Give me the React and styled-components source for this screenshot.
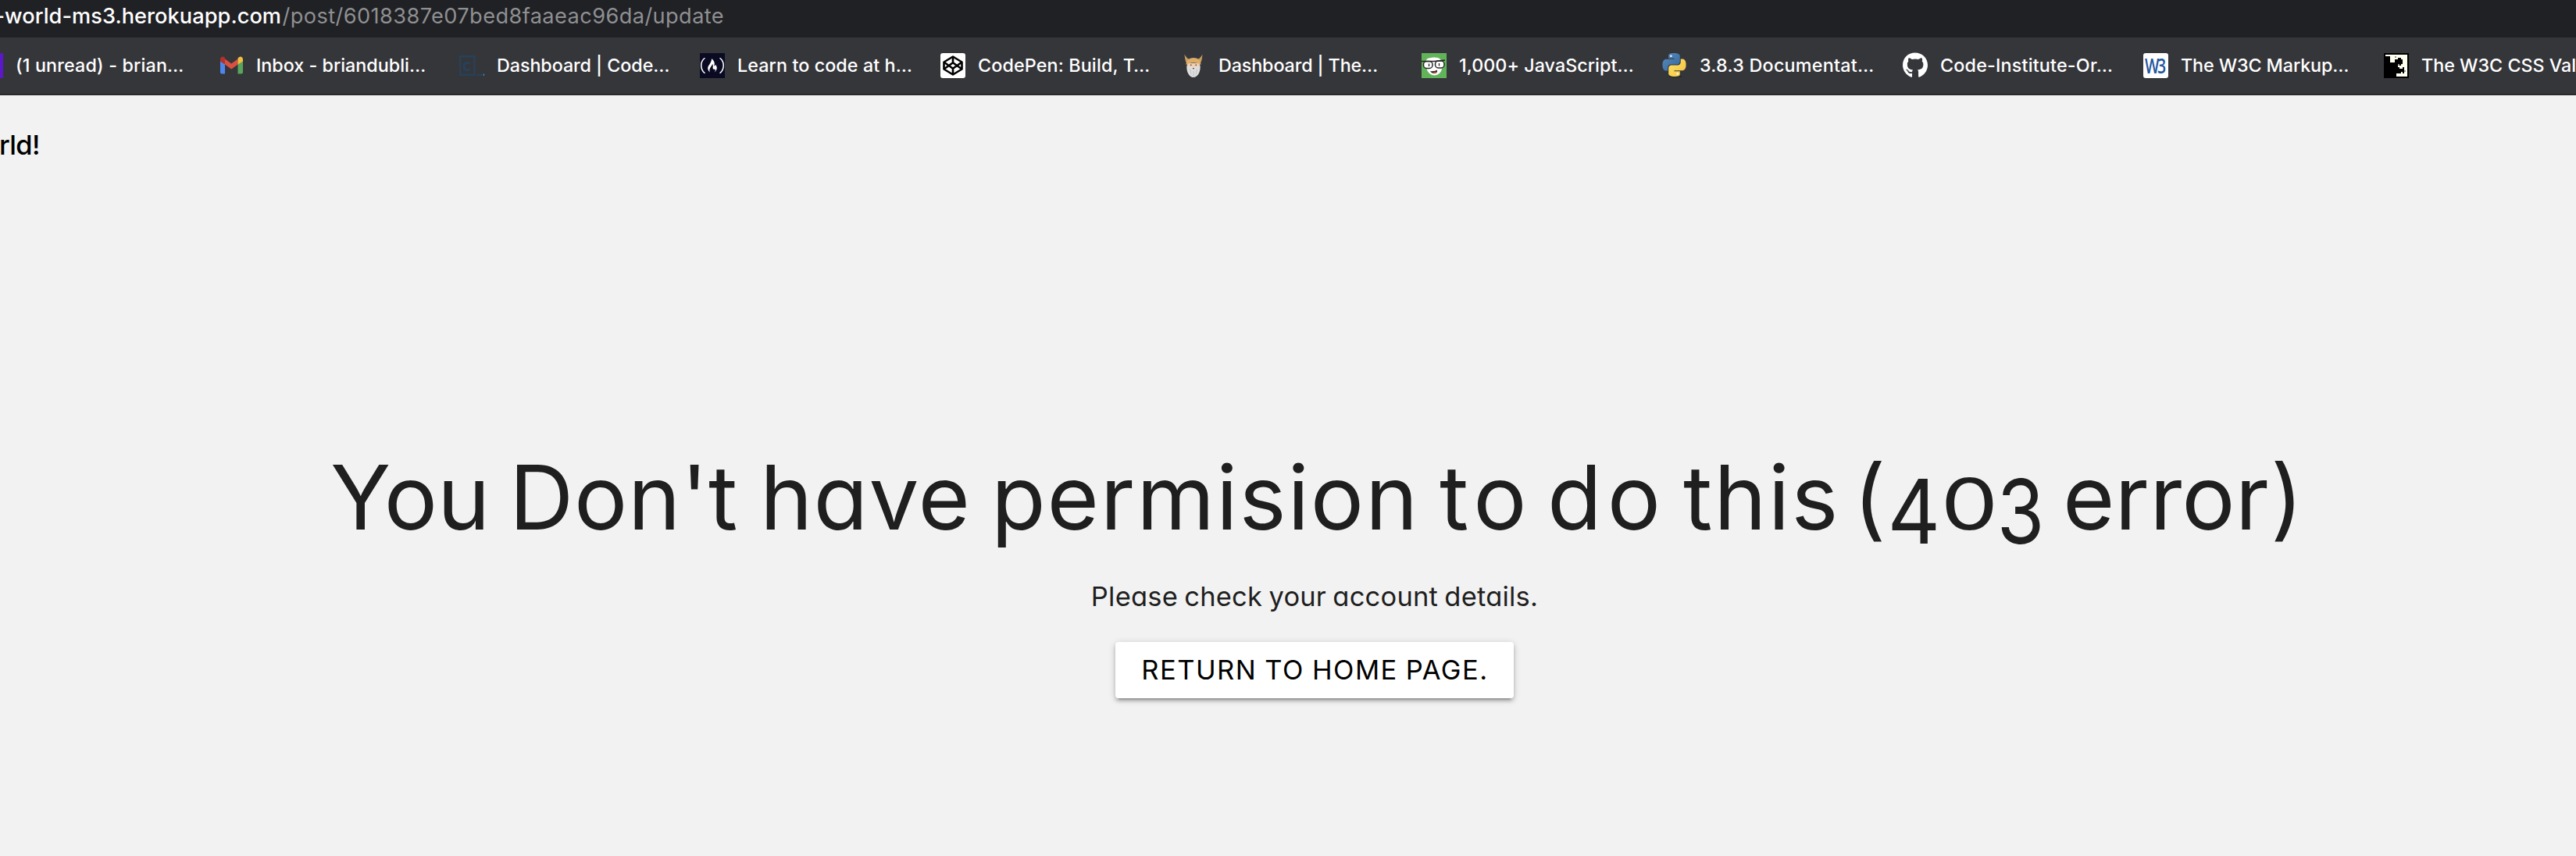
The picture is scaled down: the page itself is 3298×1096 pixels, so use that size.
import React from "react";
import styled, { createGlobalStyle } from "styled-components";
import { SiFreecodecamp } from "react-icons/si";
import { FaGithub } from "react-icons/fa";

const GlobalStyle = createGlobalStyle`
  *, *::before, *::after { box-sizing: border-box; }
  body {
    margin: 0;
    background: #f2f2f2;
    font-family: Inter, "Liberation Sans", sans-serif;
  }
`;

const Screen = styled.div`
  display: flex;
  flex-direction: column;
  width: 100%;
  height: 1096px;
  overflow: hidden;
`;

const AddressBar = styled.div`
  flex: none;
  height: 48px;
  padding-left: 6px;
  background: #202125;
  color: #8f9092;
  font-size: 27.2px;
  line-height: 42px;
  white-space: nowrap;
`;

const Host = styled.span`
  margin-left: -12.5px;
  color: #fff;
  font-weight: 500;
  letter-spacing: 0.04px;
`;

const Path = styled.span`
  letter-spacing: 0.4px;
  margin-left: 1.5px;
`;

const Bookmarks = styled.nav`
  flex: none;
  display: flex;
  width: 3600px;
  height: 74px;
  margin-left: -28px;
  padding-bottom: 1px;
  background: #35363a;
  border-bottom: 2px solid #2b2828;
`;

const Bookmark = styled.div`
  flex: none;
  display: flex;
  align-items: center;
  gap: 16px;
  width: 308px;
  color: #fff;
  font-size: 23.3px;
  font-weight: 500;
  white-space: nowrap;
  letter-spacing: ${(p) => p.$spacing || 0}px;
`;

const Favicon = styled.div`
  flex: none;
  display: flex;
  align-items: center;
  justify-content: center;
  width: 32px;
  height: 32px;
  border-radius: ${(p) => p.$radius || 0}px;
  background: ${(p) => p.$bg || "transparent"};
  color: ${(p) => p.$color || "#fff"};
`;

const W3Mark = styled.span`
  font-family: "Open Sans", sans-serif;
  font-size: 27px;
  font-weight: 600;
  letter-spacing: -3px;
  line-height: 32px;
  margin-right: 3px;
  transform: scaleX(0.72);
`;

const Page = styled.main`
  flex: 1;
  display: flex;
  flex-direction: column;
  font-feature-settings: "cv11" 1;
`;

const Brand = styled.div`
  height: 434px;
  margin-left: -1px;
  padding-top: 43px;
  color: #000;
  font-size: 34.5px;
  font-weight: 500;
  letter-spacing: -0.6px;
  line-height: 41px;
`;

const Title = styled.h1`
  display: flex;
  margin: 0;
  padding-left: 423px;
  color: #1f1f1f;
  font-size: 114px;
  font-weight: 400;
  line-height: 161px;
  white-space: nowrap;
`;

const Word = styled.span`
  letter-spacing: ${(p) => p.$spacing || 0}px;
  margin-right: ${(p) => p.$after || 0}px;
`;

const Digit = styled.span`
  display: flex;
  justify-content: center;
  width: ${(p) => p.$width}px;
  margin-right: ${(p) => p.$after || 0}px;
  font-size: ${(p) => p.$size || 114}px;
  transform: translateY(${(p) => p.$drop}px) scaleX(${(p) => p.$stretch});
`;

const Details = styled.div`
  display: flex;
  flex-direction: column;
  align-items: center;
  width: 3366px;
`;

const Message = styled.p`
  margin: 26px 0 38px;
  color: #1f1f1f;
  font-size: 34.5px;
  letter-spacing: 0.2px;
  word-spacing: -1.6px;
  line-height: 41px;
`;

const HomeButton = styled.button`
  width: 510px;
  height: 72px;
  padding: 0 0 1px 1px;
  border: 0;
  border-radius: 4px;
  background: #fff;
  color: #000;
  font: inherit;
  font-size: 34.5px;
  letter-spacing: 1.45px;
  word-spacing: -1px;
  text-transform: uppercase;
  box-shadow: 0 4px 4px rgba(0, 0, 0, 0.14), 0 6px 2px -4px rgba(0, 0, 0, 0.2),
    0 2px 10px rgba(0, 0, 0, 0.2);
`;

const GmailIcon = () => (
  <svg width="32" height="32" viewBox="0 0 32 32">
    <path d="M2 10 8 14V26.500H4a2 2 0 0 1-2-2z" fill="#4f86ec" />
    <path d="M24.500 14 31 10V24.500a2 2 0 0 1-2 2H24.500z" fill="#58a55c" />
    <path d="M8 7.500 16.250 13.500 24.500 7.500V14.500L16.250 20.500 8 14.500z" fill="#d85140" />
    <path d="M2 11V8c0-3 3-4.300 5-2.800L8 6V14.500L2 10.500z" fill="#b4302b" />
    <path d="M31 11V8c0-3-3-4.300-5-2.800l-1.500 1.200V14.500L31 10.500z" fill="#f2bf42" />
  </svg>
);

const CodecademyIcon = () => (
  <svg width="32" height="32" viewBox="0 0 32 32" fill="none" stroke="#27415a" strokeWidth="2.400">
    <path d="M1.200 4.200H19.300V27.800H1.200zM23 27.800H31" />
    <path d="M13.500 13.500c-4-2.600-7.500-.5-7.500 3.500s3.500 6.100 7.500 3.500" strokeWidth="3" />
    <path d="M31 27.800h1" stroke="#5e8fb5" />
  </svg>
);

const CodepenIcon = () => (
  <svg width="32" height="32" viewBox="0 0 32 32" fill="none" stroke="#000" strokeWidth="2.600" strokeLinejoin="round">
    <path d="M16 4.500 27.500 11.500V20.500L16 27.500 4.500 20.500V11.500z" />
    <path d="M16 4.500V12.300M16 27.500V19.700M4.500 11.500 16 19.700 27.500 11.500M4.500 20.500 16 12.300 27.500 20.500" />
  </svg>
);

const VikingIcon = () => (
  <svg width="32" height="32" viewBox="0 0 32 32">
    <path d="M4.500 1.500C5 7 5.500 11 7.500 13L11 8C7.500 7 6 4 4.500 1.500zM27.500 1.500C27 7 26.500 11 24.500 13L21 8C24.500 7 26 4 27.500 1.500z" fill="#c79e62" />
    <path d="M8 13h16v7H8z" fill="#f1cfb0" />
    <path d="M6.500 15C6.500 9 10.500 6 16 6s9.500 3 9.500 9c-3-2-6-2.500-9.500-2.500S9.500 13 6.500 15z" fill="#dcae69" />
    <path d="M7.500 15.500C9 18 13 18 16 17.500c3 .5 7 .5 8.500-2C25.500 23 22 31 16 31S6.500 23 7.500 15.500z" fill="#dedede" />
    <path d="M11.500 20 13 27M20.500 20 19 27M16 23v7" stroke="#bdbdbd" strokeWidth=".8" />
    <path d="M12 14.500h1.500v1.500H12zM18.500 14.500H20V16h-1.500zM15 19h2v1.300h-2z" fill="#53463e" />
  </svg>
);

const GlassesFaceIcon = () => (
  <svg width="32" height="32" viewBox="0 0 32 32">
    <path d="M6 9C8 5 12 7 14 5.500c4 0 8 0 10 2.500 3 3 3 9 1.500 14-1 3-5 6.500-9 6.500s-8-3-9.500-7C5.500 17 5 12 6 9z" fill="#fff" />
    <g fill="#fff" stroke="#252525" strokeWidth="1.500">
      <rect x="2.500" y="10.500" width="11.500" height="9" rx="4" />
      <rect x="17.500" y="10" width="11.500" height="9" rx="4" />
    </g>
    <path d="M0 10.500 16 10.500 30 9" stroke="#252525" strokeWidth="1.600" fill="none" />
    <path d="M9.500 13.500v3.500M22.500 13v3.500" stroke="#222" strokeWidth="1.300" />
    <path d="M11 23c3 .5 7 0 9-1.500.5 3-1 4.500-3.500 4.500S12 25 11 23z" fill="#2a2020" />
    <path d="M14.500 24.800c1.500-1.300 3.500-1.200 4.500-.6-.6 1.500-3 1.900-4.500.6z" fill="#e3483f" />
  </svg>
);

const snake =
  "M14.25.18l.9.2.73.26.59.3.45.32.34.34.25.34.16.33.1.3.04.26.02.2-.01.13V8.5l-.05.63-.13.55-.21.46-.26.38-.3.31-.33.25-.35.19-.35.14-.33.1-.3.07-.26.04-.21.02H8.77l-.69.05-.59.14-.5.22-.41.27-.33.32-.27.35-.2.36-.15.37-.1.35-.07.32-.04.27-.02.21v3.06H3.17l-.21-.03-.28-.07-.32-.12-.35-.18-.36-.26-.36-.36-.35-.46-.32-.59-.28-.73-.21-.88-.14-1.05-.05-1.23.06-1.22.16-1.04.24-.87.32-.71.36-.57.4-.44.42-.33.42-.24.4-.16.36-.1.32-.05.24-.01h.16l.06.01h8.16v-.83H6.18l-.01-2.75-.02-.37.05-.34.11-.31.17-.28.25-.26.31-.23.38-.2.44-.18.51-.15.58-.12.64-.1.71-.06.77-.04.84-.02 1.27.05z";

const PythonIcon = () => (
  <svg width="32" height="32" viewBox="0 0 32 32">
    <defs>
      <linearGradient id="blue" x1="0" y1="0" x2="1" y2="1">
        <stop offset="0" stopColor="#5a8cbf" />
        <stop offset="1" stopColor="#336699" />
      </linearGradient>
      <linearGradient id="yellow" x1="0" y1="0" x2="1" y2="1">
        <stop offset="0" stopColor="#f0c243" />
        <stop offset="1" stopColor="#ffe264" />
      </linearGradient>
    </defs>
    <ellipse cx="17" cy="30" rx="9" ry="1.500" fill="#29292b" />
    <g transform="translate(0.500 0) scale(1.250)">
      <path d={snake} fill="url(#blue)" />
      <path d={snake} fill="url(#yellow)" transform="rotate(180 12 12)" />
      <circle cx="8.700" cy="2.900" r="1" fill="#fff" />
      <circle cx="15.300" cy="21.100" r="1" fill="#fff" />
    </g>
  </svg>
);

const CssValidatorIcon = () => (
  <svg width="32" height="32" viewBox="0 0 32 32" shapeRendering="crispEdges">
    <path d="M2 2H30V30H16V26H22V24H24V20H20V18H18V16H22V14H24V8H22V6H18V8H14V12H8V4H2z" fill="#fffff0" />
    <path d="M14 4h2v2h-2zM18 14h2v2h-2zM26 22h2v2h-2z" fill="#9b9b94" />
    <path d="M24 18h2v8h-2z" fill="#000" />
  </svg>
);

const bookmarks = [
  { label: "(1 unread) - brian…", spacing: 0.15, bg: "#5b17c9" },
  { label: "Inbox - briandubli…", spacing: 0, icon: <GmailIcon /> },
  { label: "Dashboard | Code…", spacing: -0.06, icon: <CodecademyIcon /> },
  { label: "Learn to code at h…", spacing: 0.09, bg: "#0a0a23", icon: <SiFreecodecamp size={30} /> },
  { label: "CodePen: Build, T…", spacing: 0.14, bg: "#fff", radius: 3, icon: <CodepenIcon /> },
  { label: "Dashboard | The…", spacing: -0.12, icon: <VikingIcon /> },
  { label: "1,000+ JavaScript…", spacing: 0.04, bg: "#62b45a", icon: <GlassesFaceIcon /> },
  { label: "3.8.3 Documentat…", spacing: 0.25, icon: <PythonIcon /> },
  { label: "Code-Institute-Or…", spacing: 0.2, icon: <FaGithub size={33} /> },
  { label: "The W3C Markup…", spacing: -0.1, bg: "#fff", color: "#1f569f", radius: 3, icon: <W3Mark>W3</W3Mark> },
  { label: "The W3C CSS Val", spacing: 0, bg: "#000", icon: <CssValidatorIcon /> },
];

export default function App() {
  return (
    <Screen>
      <GlobalStyle />
      <AddressBar>
        <Host>-world-ms3.herokuapp.com</Host>
        <Path>/post/6018387e07bed8faaeac96da/update</Path>
      </AddressBar>
      <Bookmarks>
        {bookmarks.map((b) => (
          <Bookmark key={b.label} $spacing={b.spacing}>
            <Favicon $bg={b.bg} $color={b.color} $radius={b.radius}>
              {b.icon}
            </Favicon>
            {b.label}
          </Bookmark>
        ))}
      </Bookmarks>
      <Page>
        <Brand>rld!</Brand>
        <Title>
          <Word $after={24.6}>You</Word>
          <Word $spacing={0.7} $after={28}>Don't</Word>
          <Word $spacing={1.2} $after={25.7}>have</Word>
          <Word $spacing={1.8} $after={25.9}>permision</Word>
          <Word $spacing={7} $after={19.5}>to</Word>
          <Word $spacing={7} $after={21.8}>do</Word>
          <Word $spacing={2} $after={17.2}>this</Word>
          <Word>(</Word>
          <Digit $width={72.8} $drop={18} $stretch={0.92}>4</Digit>
          <Digit $width={69} $drop={9.3} $stretch={1.28} $size={91}>0</Digit>
          <Digit $width={62} $drop={18} $stretch={0.86} $after={23}>3</Digit>
          <Word $after={2.5}>error</Word>
          <Word>)</Word>
        </Title>
        <Details>
          <Message>Please check your account details.</Message>
          <HomeButton type="button">Return to home page.</HomeButton>
        </Details>
      </Page>
    </Screen>
  );
}
